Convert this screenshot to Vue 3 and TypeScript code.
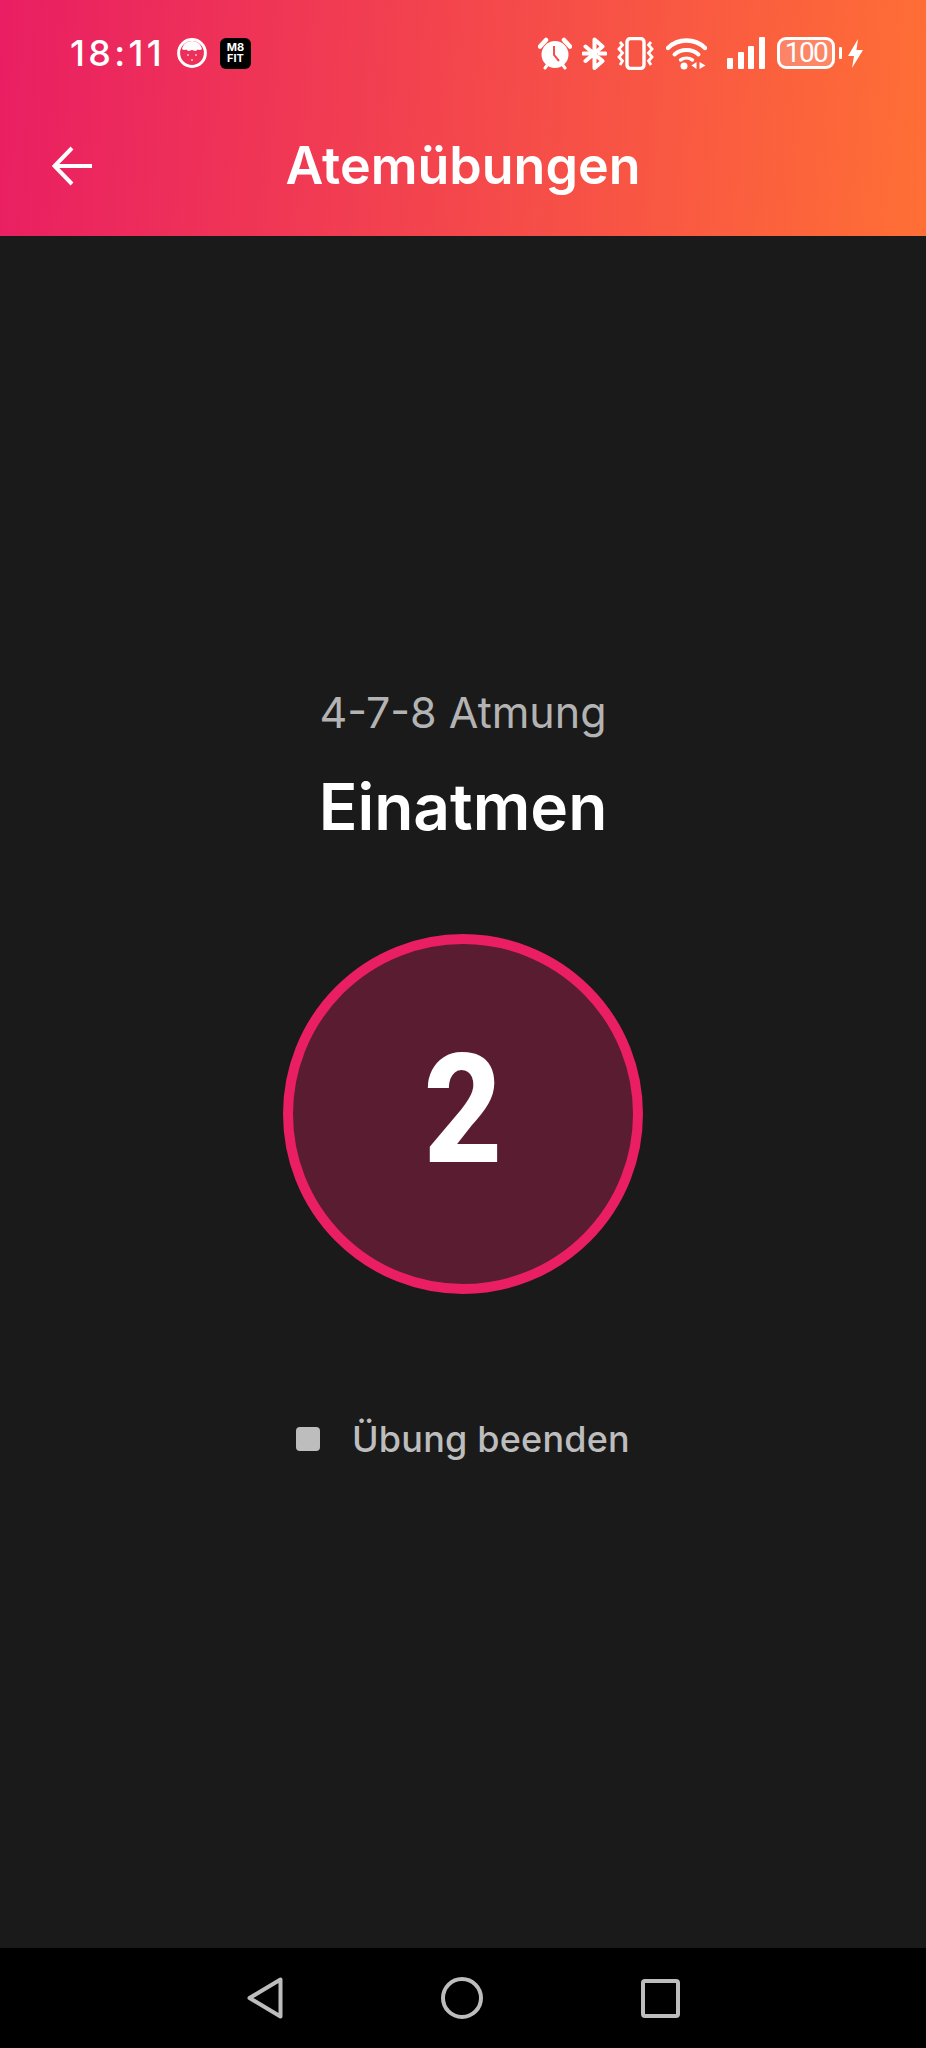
<template>
  <div class="screen">
    <header class="top">
      <div class="status">
        <div class="status-left">
          <span class="clock">18:11</span>
          <svg class="berry" viewBox="0 0 30 30" width="30" height="30">
            <circle cx="15" cy="15" r="13.400" fill="none" stroke="#fff" stroke-width="3" />
            <path d="M5 11c1-5 5-8 10-8s9 3 10 8c-2 2-4 0-5 1-2 2-3 0-5 0s-3 2-5 0c-1-1-3 1-5-1z" fill="#fff" />
            <circle cx="11" cy="17" r="1" fill="#fff" opacity=".7" />
            <circle cx="19" cy="17" r="1" fill="#fff" opacity=".7" />
            <circle cx="15" cy="22" r="1" fill="#fff" opacity=".7" />
          </svg>
          <span class="badge">M8<br />FIT</span>
        </div>
        <div class="status-right">
          <svg viewBox="0 0 34 33" width="34" height="33">
            <circle cx="17" cy="17.500" r="13.500" fill="#fff" />
            <path d="M2 9.500 8 3" stroke="#fff" stroke-width="4.500" stroke-linecap="round" />
            <path d="M32 9.500 26 3" stroke="#fff" stroke-width="4.500" stroke-linecap="round" />
            <path d="M7 31l3-4M27 31l-3-4" stroke="#fff" stroke-width="3" stroke-linecap="round" />
            <path d="M16 9v9l5 6" fill="none" stroke="#f4504f" stroke-width="2" />
          </svg>
          <svg class="bt" viewBox="0 0 25 33" width="25" height="33">
            <path d="M3.500 9.500l17 14.500-8 7V2.500l8 7-17 14.500" fill="none" stroke="#fff" stroke-width="4" stroke-linejoin="round" stroke-linecap="round" />
            <path d="M1.500 16.500h6M17.500 16.500h6" stroke="#fff" stroke-width="4" stroke-linecap="round" />
          </svg>
          <svg class="vib" viewBox="0 0 37 33" width="37" height="33">
            <rect x="10" y="1.500" width="17" height="30" rx="3.500" fill="none" stroke="#fff" stroke-width="3.400" />
            <path d="M3 5l2.500 3L2 12l3.500 4L2 20l3.500 4L3 28M34 5l-2.500 3L35 12l-3.500 4L35 20l-3.500 4L34 28" fill="none" stroke="#fff" stroke-width="2.800" />
          </svg>
          <svg class="wifi" viewBox="0 0 41 33" width="41" height="33">
            <path d="M2 11C12 1 29 1 39 11" fill="none" stroke="#fff" stroke-width="4.400" stroke-linecap="round" />
            <path d="M8.500 17.500c6.500-6 17.500-6 24 0" fill="none" stroke="#fff" stroke-width="4" stroke-linecap="round" />
            <path d="M14.500 23c3.500-2.500 8.500-2.500 12 0" fill="none" stroke="#fff" stroke-width="3.400" stroke-linecap="round" />
            <circle cx="18" cy="29" r="3.500" fill="#fff" />
            <path d="M30.500 25v7l-5-3.500zM33.500 25v7l6-3.500z" fill="#fff" />
          </svg>
          <div class="signal">
            <i v-for="h in bars" :key="h" :style="{ height: h + 'px' }"></i>
          </div>
          <div class="battery-wrap">
            <div class="battery">100</div>
            <span class="nub"></span>
            <svg viewBox="0 0 15 29" width="15" height="29">
              <path d="M10 0 0 17h6l-2 12L15 11H8.500z" fill="#fff" />
            </svg>
          </div>
        </div>
      </div>
      <div class="appbar">
        <svg class="back" viewBox="0 0 41 40" width="41" height="40">
          <path d="M40 20H3M20 2 2.500 20 20 38" fill="none" stroke="#fff" stroke-width="4" />
        </svg>
        <h1>Atemübungen</h1>
      </div>
    </header>

    <main class="content">
      <p class="kind">4-7-8 Atmung</p>
      <h2>Einatmen</h2>
      <div class="ring"><span class="digit">{{ count }}</span></div>
      <div class="stop">
        <span class="stop-icon"></span>
        <span>Übung beenden</span>
      </div>
    </main>

    <nav class="nav">
      <svg viewBox="0 0 36 42" width="36" height="42">
        <path d="M33.500 2.500v37L2.500 21z" fill="none" stroke="#bdbdbd" stroke-width="4" stroke-linejoin="round" />
      </svg>
      <svg viewBox="0 0 42 42" width="42" height="42">
        <circle cx="21" cy="21" r="19" fill="none" stroke="#bdbdbd" stroke-width="4" />
      </svg>
      <svg viewBox="0 0 39 39" width="39" height="39">
        <rect x="2" y="2" width="35" height="35" rx="2" fill="none" stroke="#bdbdbd" stroke-width="4" />
      </svg>
    </nav>
  </div>
</template>

<script setup lang="ts">
import { ref } from 'vue'

const count = ref(2)
const bars = [11, 17, 23, 32]
</script>

<style>
html,
body {
  margin: 0;
  background: #1a1a1a;
}
</style>

<style scoped>
.screen {
  width: 926px;
  height: 2048px;
  display: flex;
  flex-direction: column;
  background: #1a1a1a;
  font-family: Inter, "Liberation Sans", sans-serif;
  overflow: hidden;
}

.top {
  height: 236px;
  background: linear-gradient(95deg, #e91e63, #ff6f35);
  color: #fff;
  flex: none;
}

.status {
  height: 136px;
  box-sizing: border-box;
  padding: 37px 63px 0 70px;
  display: flex;
  justify-content: space-between;
  align-items: flex-start;
}

.status-left {
  display: flex;
  align-items: center;
  height: 32px;
}

.clock {
  font-size: 36px;
  font-weight: 500;
  letter-spacing: 3.3px;
  width: 107px;
  white-space: nowrap;
}

.badge {
  margin-left: 13px;
  width: 31px;
  height: 31px;
  border-radius: 6px;
  background: #000;
  font-size: 11px;
  font-weight: 700;
  line-height: 11px;
  text-align: center;
  padding-top: 4px;
  box-sizing: border-box;
}

.status-right {
  display: flex;
  gap: 10px;
  align-items: flex-start;
}

.wifi {
  margin-left: 2px;
}

.signal {
  margin-left: 10px;
  width: 38px;
  height: 32px;
  display: flex;
  align-items: flex-end;
  justify-content: space-between;
}

.signal i {
  width: 6px;
  background: #fff;
  border-radius: 1px;
}

.battery-wrap {
  margin-left: 2px;
  display: flex;
  align-items: center;
}

.battery {
  width: 58px;
  height: 32px;
  box-sizing: border-box;
  border: 3px solid #fff;
  border-radius: 9px;
  background: rgba(255, 255, 255, 0.22);
  font-family: Roboto, sans-serif;
  font-size: 28px;
  letter-spacing: -1.5px;
  line-height: 26px;
  text-align: center;
}

.nub {
  width: 3px;
  height: 12px;
  margin: 0 6px 0 4px;
  background: #fff;
  border-radius: 1px;
}

.appbar {
  height: 60px;
  padding-left: 52px;
  display: flex;
  align-items: center;
}

.back {
  flex: none;
}

.appbar h1 {
  margin: 0 93px 0 0;
  flex: 1;
  text-align: center;
  font-size: 52px;
  font-weight: 600;
  line-height: 60px;
}

.content {
  flex: 1;
  display: flex;
  flex-direction: column;
  align-items: center;
  justify-content: center;
  padding-bottom: 36px;
}

.kind {
  margin: 0;
  font-size: 43px;
  line-height: 50px;
  color: #b3b3b3;
}

h2 {
  margin: 32px 0 0;
  font-size: 64px;
  font-weight: 600;
  line-height: 76px;
  color: #fff;
}

.ring {
  margin-top: 89px;
  width: 360px;
  height: 360px;
  box-sizing: border-box;
  border: 10px solid #e91e63;
  border-radius: 50%;
  background: #5a1c30;
  color: #fff;
  font-family: Roboto, sans-serif;
  font-size: 152px;
  font-weight: 800;
  padding-bottom: 8px;
  display: flex;
  align-items: center;
  justify-content: center;
}

.digit {
  transform: scaleX(0.9);
}

.stop {
  margin-top: 123px;
  display: flex;
  align-items: center;
  gap: 32px;
  font-size: 36px;
  letter-spacing: 0.2px;
  font-weight: 500;
  line-height: 44px;
  color: #bdbdbd;
}

.stop-icon {
  width: 24px;
  height: 24px;
  border-radius: 4px;
  background: #bdbdbd;
}

.nav {
  height: 100px;
  flex: none;
  background: #000;
  display: flex;
  align-items: center;
  padding-left: 247px;
  gap: 158px;
}
</style>
